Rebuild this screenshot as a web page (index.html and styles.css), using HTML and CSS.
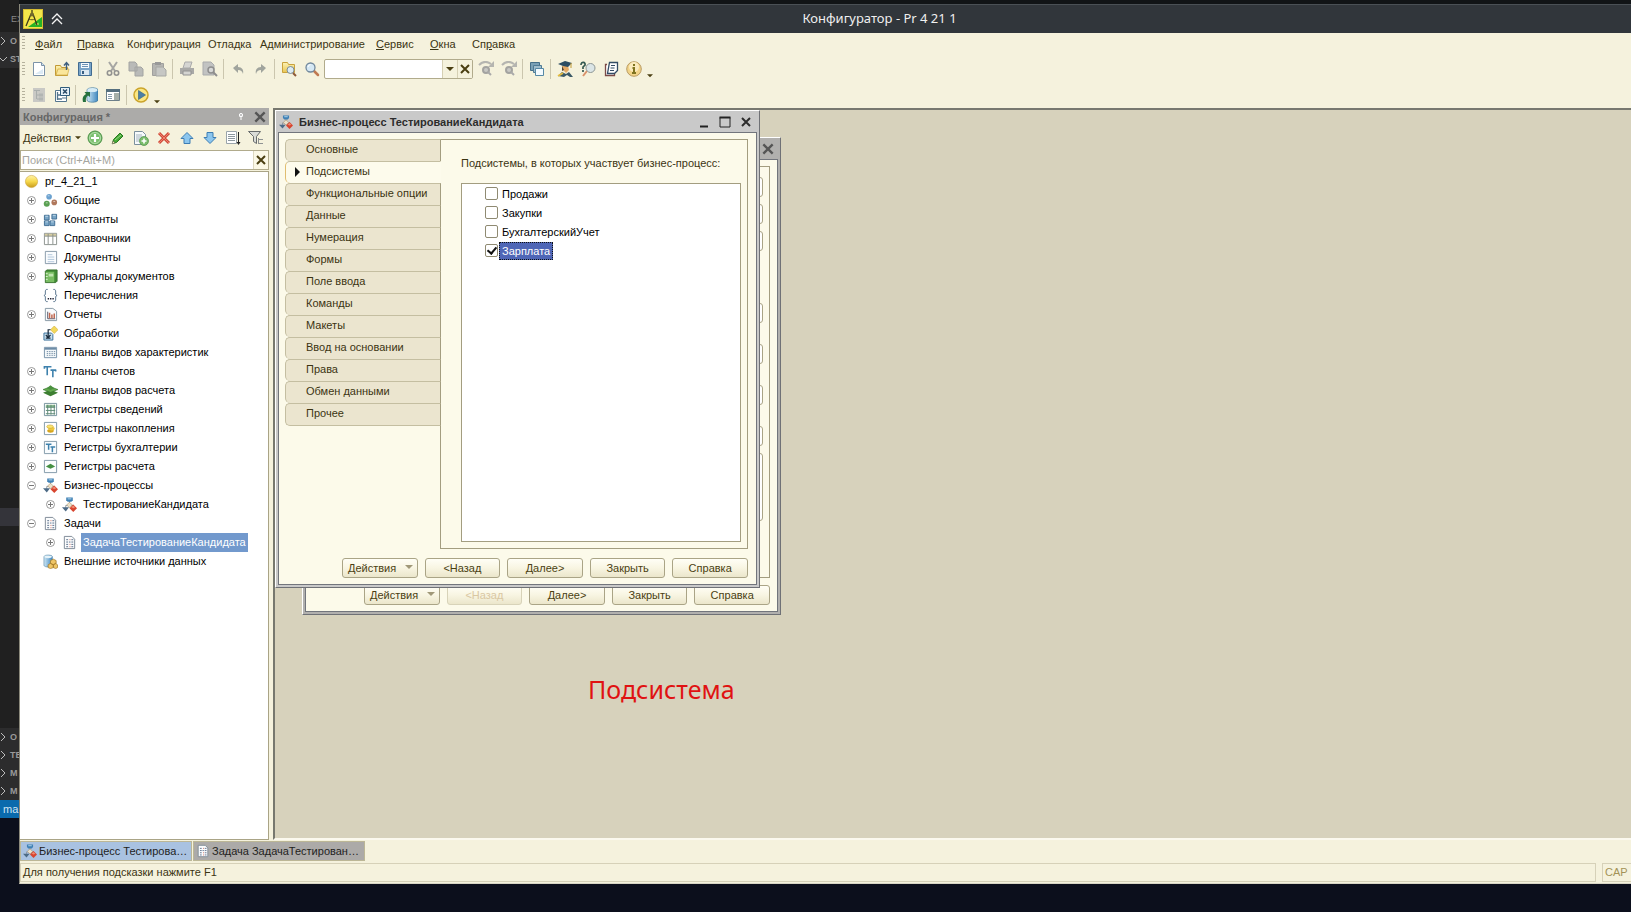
FILE: index.html
```html
<!DOCTYPE html>
<html lang="ru">
<head>
<meta charset="utf-8">
<title>Конфигуратор - Pr 4 21 1</title>
<link rel="stylesheet" href="styles.css">
</head>
<body>
<svg class="sprite" aria-hidden="true">
  <defs>
    <linearGradient id="gold" x1="0" y1="0" x2="0" y2="1"><stop offset="0" stop-color="#fff3a8"/><stop offset=".5" stop-color="#f6d84c"/><stop offset="1" stop-color="#c79a1c"/></linearGradient>
    <linearGradient id="blue" x1="0" y1="0" x2="1" y2="0"><stop offset="0" stop-color="#cfe8f6"/><stop offset="1" stop-color="#3f86bd"/></linearGradient>
    <linearGradient id="folder" x1="0" y1="0" x2="0" y2="1"><stop offset="0" stop-color="#fdf3b4"/><stop offset="1" stop-color="#e8c552"/></linearGradient>
  </defs>
  <symbol id="plus" viewBox="0 0 11 11"><circle cx="5.5" cy="5.5" r="4" fill="#fff" stroke="#999"/><path d="M3 5.5h5M5.5 3v5" stroke="#777"/></symbol>
  <symbol id="minus" viewBox="0 0 11 11"><circle cx="5.5" cy="5.5" r="4" fill="#fff" stroke="#999"/><path d="M3 5.5h5" stroke="#777"/></symbol>
  <symbol id="process" viewBox="0 0 16 16"><path d="M8 4v4M4 12V9h8v3" fill="none" stroke="#8a94a0"/><path d="M4.500 .5h7v3l-1.500 1.500h-4L4.500 3.500z" fill="#3f80b4"/><path d="M6 1.500h4v1H6z" fill="#b9dcf2"/><path d="M8 5.500l3 3-3 3-3-3z" fill="#ebe0ca" stroke="#a88e60" stroke-width=".6"/><path d="M0 11h7.500L4 15.500z" fill="#4c6a86"/><path d="M12 8l4 4-4 4-4-4z" fill="#d8452f"/><path d="M12 9l2 2-2 1-2-1z" fill="#f08b72"/></symbol>
  <symbol id="task" viewBox="0 0 16 16"><path d="M2.500 1.500h8l3 3v10h-11z" fill="#fbfcfd" stroke="#7c8894"/><path d="M4.500 5h2M4.500 7.500h2M4.500 10h2M4.500 12.500h2" stroke="#566c88"/><path d="M8 5h1M8 10h1M8 12.500h1" stroke="#d0634f"/><path d="M10 5h2M10 7.500h2M10 10h2M10 12.500h2M7.500 7.500h1.500" stroke="#566c88"/></symbol>
  <symbol id="cross" viewBox="0 0 12 12"><path d="M2 2l8 8M10 2l-8 8" fill="none" stroke="currentColor" stroke-width="2"/></symbol>
  <symbol id="down" viewBox="0 0 8 5"><path d="M0 0h8L4 4z" fill="currentColor"/></symbol>
  <symbol id="chev" viewBox="0 0 6 10"><path d="M1 1l4 4-4 4" fill="none" stroke="#bbb"/></symbol>
  <symbol id="lens" viewBox="0 0 16 16"><path d="M10 10l4 4" stroke="#c07a52" stroke-width="2.500" stroke-linecap="round"/><circle cx="6.500" cy="6.500" r="4.500" fill="#d5e8f4" stroke="#71889c" stroke-width="1.300"/><path d="M4 6a3 3 0 0 1 2.500-2.500" fill="none" stroke="#fff"/></symbol>
  <symbol id="skip" viewBox="0 0 16 16"><path d="M1 4c4-4 8-4 12-1" fill="none" stroke="#b5b5b0" stroke-width="2"/><path d="M10 6h6V0z" fill="#b5b5b0"/><circle cx="8" cy="9" r="3" fill="#c8c8c4" stroke="#a3a3a0" stroke-width="2"/><path d="M10 11l3 3" stroke="#aaa" stroke-width="2"/></symbol>
  <symbol id="tt" viewBox="0 0 16 16"><path d="M1 3h8M4.500 3v9M8 6.500h6M10.500 6.500V14M1.500 2v3M13.500 6v2" fill="none" stroke="#3d81ad" stroke-width="1.700"/></symbol>
  <symbol id="layers" viewBox="0 0 16 16"><path d="M0 10.500l8-3.500 8 3.500-8 3.500z" fill="#3d7f32"/><path d="M0 7l8-3 8 3-8 3z" fill="#62a94e" stroke="#2f6e28" stroke-width=".6"/><path d="M4 5.500L8 2.500l4 3-4 2z" fill="#4b9140"/></symbol>
</svg>

<div class="desktop">
  <aside class="editor-strip" aria-label="Редактор">
    <div class="es-row es-head">EX</div>
    <div class="es-row es-section"><svg class="chev"><use href="#chev"/></svg>O</div>
    <div class="es-row es-section"><svg class="chev open"><use href="#chev"/></svg>ST</div>
    <div class="es-body"><div class="es-current"></div></div>
    <div class="es-row es-section"><svg class="chev"><use href="#chev"/></svg>O</div>
    <div class="es-row es-section"><svg class="chev"><use href="#chev"/></svg>TE</div>
    <div class="es-row es-section"><svg class="chev"><use href="#chev"/></svg>M</div>
    <div class="es-row es-section"><svg class="chev"><use href="#chev"/></svg>M</div>
    <div class="es-row es-status">ma</div>
  </aside>

  <div class="app">
    <header class="titlebar">
      <svg class="logo" viewBox="0 0 20 20"><rect width="20" height="20" fill="#f3e64a"/><rect x=".5" y=".5" width="19" height="19" fill="none" stroke="#d5bb32"/><path d="M5 18l14-10v10z" fill="#27b324"/><path d="M12 16l3.500-2.500V16z" fill="#e8f06c"/><path d="M9 1v3M8 5L3 17M10 5l4 11" fill="none" stroke="#3d3a18" stroke-width="1.300"/><circle cx="9" cy="5.500" r="2" fill="#746b2c"/><path d="M6 10c2 1 4 1 6 0" fill="none" stroke="#3d3a18" stroke-width=".8"/></svg>
      <svg class="collapse" viewBox="0 0 12 12"><path d="M1 6l5-5 5 5M1 11l5-5 5 5" fill="none" stroke="#f4f4f4" stroke-width="1.300"/></svg>
      <h1>Конфигуратор - Pr 4 21 1</h1>
    </header>

    <nav class="menubar">
      <span class="grip"></span>
      <button><u>Ф</u>айл</button><button><u>П</u>равка</button><button>Конфигурация</button><button>Отладка</button><button>Администрирование</button><button><u>С</u>ервис</button><button><u>О</u>кна</button><button>Сп<u>р</u>авка</button>
    </nav>

    <div class="toolbar">
      <span class="grip"></span>
      <button class="tool" aria-label="Новый"><svg viewBox="0 0 16 16"><path d="M2.500 1.500h8l3 3v10h-11z" fill="#fff" stroke="#7c93a8"/><path d="M10.500 1.500v3h3" fill="#cfe0ee" stroke="#7c93a8"/><path d="M4 13h8V8z" fill="#dceaf5"/></svg></button>
      <button class="tool" aria-label="Открыть"><svg viewBox="0 0 16 16"><path d="M1.500 4.500h5l1 2h6v8h-12z" fill="url(#folder)" stroke="#c29a35"/><path d="M2 14l2-6h11l-1.500 6z" fill="#fae69b" stroke="#d1ac46" stroke-width=".7"/><path d="M12.500 9V2M10 4.500L12.500 1.500 15 4.500" fill="none" stroke="#3e5f7f" stroke-width="1.400"/></svg></button>
      <button class="tool" aria-label="Сохранить"><svg viewBox="0 0 16 16"><path d="M1.500 1.500h13v13h-13z" fill="#79a4c8" stroke="#416b91"/><path d="M4 2h8v5H4z" fill="#f6fafc"/><path d="M5 3.500h6M5 5.500h6" stroke="#6d94b6"/><path d="M4 9h8v5H4z" fill="#dbe7f0"/><path d="M5 10h2v3H5z" fill="#365d82"/></svg></button>
      <span class="sep"></span>
      <button class="tool" aria-label="Вырезать" disabled><svg viewBox="0 0 16 16"><path d="M4 1l6 9M12 1l-6 9" stroke="#a6a6a3" stroke-width="2"/><circle cx="4.500" cy="12" r="2.200" fill="none" stroke="#929290" stroke-width="1.600"/><circle cx="11.500" cy="12" r="2.200" fill="none" stroke="#929290" stroke-width="1.600"/></svg></button>
      <button class="tool" aria-label="Копировать" disabled><svg viewBox="0 0 16 16"><path d="M1 1h6l2 2v7H1zM7 6h6l2 2v7H7z" fill="#b9bab8" stroke="#a3a4a2"/></svg></button>
      <button class="tool" aria-label="Вставить" disabled><svg viewBox="0 0 16 16"><path d="M1.500 2.500h11v12h-11z" fill="#b5b5b2" stroke="#a0a09d"/><path d="M4 1h6v3H4z" fill="#999"/><path d="M5 6h7l3 3v6H5z" fill="#c6c7c4" stroke="#a6a7a4"/></svg></button>
      <span class="sep"></span>
      <button class="tool" aria-label="Печать" disabled><svg viewBox="0 0 16 16"><path d="M4 7L6 1h7l-2 6z" fill="#d5d5d2" stroke="#aaa"/><path d="M1 7h14v6H1z" fill="#a9a9a7"/><path d="M4 10h8v4H4z" fill="#d4d4d1" stroke="#929292"/></svg></button>
      <button class="tool" aria-label="Просмотр" disabled><svg viewBox="0 0 16 16"><path d="M1 1h8l3 3v10H1z" fill="#c2c3c2" stroke="#a9abac"/><circle cx="9" cy="9" r="3" fill="#d7d8d7" stroke="#8e8e8e" stroke-width="1.500"/><path d="M11 11l4 4" stroke="#8e8e8e" stroke-width="2"/></svg></button>
      <span class="sep"></span>
      <button class="tool" aria-label="Отменить" disabled><svg viewBox="0 0 16 16"><path d="M3 7l5-4v3c4 0 6 3 5 7-1-3-2-4-5-4v3z" fill="#a0a49d"/></svg></button>
      <button class="tool" aria-label="Вернуть" disabled><svg viewBox="0 0 16 16"><path d="M13 7L8 3v3c-4 0-6 3-5 7 1-3 2-4 5-4v3z" fill="#a0a49d"/></svg></button>
      <span class="sep"></span>
      <button class="tool" aria-label="Глобальный поиск"><svg viewBox="0 0 16 16"><path d="M1.500 1.500h5l1 2h6v8h-12z" fill="url(#folder)" stroke="#c9a23c"/><circle cx="9.500" cy="9" r="3.500" fill="#dcebf3" stroke="#7b8d98"/><path d="M12 12l3 3" stroke="#8c5939" stroke-width="2"/></svg></button>
      <button class="tool" aria-label="Найти"><svg><use href="#lens"/></svg></button>
      <div class="combo"><input aria-label="Искать"><button aria-label="Список"><svg class="arrow"><use href="#down"/></svg></button><button aria-label="Очистить"><svg class="x-small"><use href="#cross"/></svg></button></div>
      <button class="tool" aria-label="Найти далее" disabled><svg><use href="#skip"/></svg></button>
      <button class="tool" aria-label="Найти ранее" disabled><svg><use href="#skip"/></svg></button>
      <span class="sep"></span>
      <button class="tool" aria-label="Окна"><svg viewBox="0 0 16 16"><path d="M1.500 1.500h9v8h-9z" fill="#7aa0b5" stroke="#456f88"/><path d="M4.500 4.500h8v7h-8z" fill="#9fbccb" stroke="#4f7b95"/><path d="M6.500 7.500h8v7h-8z" fill="#f3fafe" stroke="#5689a5"/></svg></button>
      <span class="sep"></span>
      <button class="tool" aria-label="Синтаксис-помощник"><svg viewBox="0 0 16 16"><path d="M5 5h6l1 4-3 3-3-3z" fill="#e5aa66"/><path d="M1 3l7-3 7 2-4 4-5-1z" fill="#2c4d63"/><path d="M14 2v5" stroke="#c49c35"/><path d="M5 5l2 4-2 1z" fill="#50402f"/><path d="M1 15l4-4 4 2 3-2 4 5h-3l-3-2-3 2z" fill="#3b5966"/><path d="M1 15l5-3" stroke="#e4bb3e" stroke-width="2"/></svg></button>
      <button class="tool" aria-label="Поиск в справке"><svg viewBox="0 0 16 16"><path d="M1 4c0-4 5-3 4 0L3 6v2M3 9v2" fill="none" stroke="#355a52" stroke-width="1.700"/><path d="M7 10l-4 5" stroke="#d99169" stroke-width="2"/><circle cx="10.500" cy="7" r="4.500" fill="#dbe5e6" stroke="#8d9694"/></svg></button>
      <button class="tool" aria-label="Шаблоны"><svg viewBox="0 0 16 16"><path d="M4 3.500H2.500v11h9V13" fill="#fff" stroke="#7c4b47" stroke-width="1.300"/><path d="M6.500 1.500h8v8l-3 3h-7z" fill="#fff" stroke="#334c65" stroke-width="1.300"/><path d="M8 4.500h4M7.500 7h4M7 9.500h4" stroke="#334c65"/></svg></button>
      <button class="tool" aria-label="О программе"><svg viewBox="0 0 16 16"><circle cx="8" cy="8" r="7.300" fill="#f2d488" stroke="#b99b64"/><circle cx="8" cy="6" r="5" fill="#fbebbd"/><path d="M8 3v2M6.500 7H8v5M6 12h4" fill="none" stroke="#7f7420" stroke-width="2"/></svg></button>
      <svg class="arrow overflow"><use href="#down"/></svg>
    </div>

    <div class="toolbar">
      <span class="grip"></span>
      <button class="tool" aria-label="Открыть конфигурацию" disabled><svg viewBox="0 0 16 16"><path d="M2 1h12v14H2z" fill="#c9c9c5"/><path d="M3 3.500h6M5.500 4v8M6 8h2M6 12h2" fill="none" stroke="#a9aeac"/><path d="M8 6.500h4v3H8zM8 10.500h4v3H8z" fill="#b2b5b3"/></svg></button>
      <button class="tool" aria-label="Закрыть конфигурацию"><svg viewBox="0 0 16 16"><path d="M1.500 3.500h11v11h-11z" fill="#fff" stroke="#54768e"/><path d="M3.500 5v8M4 8h4M4 12h4" stroke="#54768e" stroke-width="1.300"/><path d="M6.500 .5h9v8h-9z" fill="#e7f1f7" stroke="#305c7c"/><path d="M9 2.500l4 4M13 2.500l-4 4" stroke="#274967" stroke-width="1.500"/><path d="M8 11h4" stroke="#54768e"/></svg></button>
      <span class="sep"></span>
      <button class="tool" aria-label="Обновить базу"><svg viewBox="0 0 16 16"><path d="M5 3c0-3 11-3 11 0v10c0 3-11 3-11 0z" fill="url(#blue)" stroke="#346c91" stroke-width=".6"/><ellipse cx="10.500" cy="3" rx="5" ry="2" fill="#d6ebf5"/><path d="M1 15c-1-4 0-6 3-8L2.500 5H8v5L6 8.500C4 10 3.500 12 4 15z" fill="#26713e"/></svg></button>
      <button class="tool" aria-label="Палитра"><svg viewBox="0 0 16 16"><path d="M1.500 2.500h13v11h-13z" fill="#fff" stroke="#6d7f89"/><path d="M1 2h14v3H1z" fill="#556f7f"/><path d="M3 7.500h4M3 9.500h4M3 11.500h4" stroke="#869aaa"/><path d="M9 6h5v7H9z" fill="#a6afa9"/></svg></button>
      <span class="sep"></span>
      <button class="tool" aria-label="Начать отладку"><svg viewBox="0 0 16 16"><circle cx="8" cy="8" r="7" fill="#fbe784" stroke="#cba42b" stroke-width="1.500"/><path d="M5.500 3.500l7 4.500-7 4.500z" fill="#4c7fa6" stroke="#2e5f85" stroke-width=".6"/></svg></button>
      <svg class="arrow overflow"><use href="#down"/></svg>
    </div>

    <main class="main">
      <section class="sidebar">
        <div class="side-title"><h2>Конфигурация *</h2><svg class="pin" viewBox="0 0 6 10"><path d="M3 5v3M1.500 4.500h3" stroke="#fff"/><circle cx="3" cy="3" r="1.600" fill="#bbb" stroke="#fff"/></svg><svg class="x-large"><use href="#cross"/></svg></div>
        <div class="side-tools">
          <button class="actions">Действия <svg class="arrow small"><use href="#down"/></svg></button>
          <button class="tool" aria-label="Добавить"><svg viewBox="0 0 16 16"><circle cx="8" cy="8" r="7" fill="#7cc06f" stroke="#4b9045"/><circle cx="8" cy="8" r="5.500" fill="none" stroke="#b2deaa"/><path d="M8 4v8M4 8h8" stroke="#fff" stroke-width="2.200"/></svg></button>
          <button class="tool" aria-label="Изменить"><svg viewBox="0 0 16 16"><path d="M2.500 13.500l1-4 6.500-6.500 3 3-6.500 6.500z" fill="#45a936" stroke="#27761f"/><path d="M5 10l6-5" stroke="#9ada88"/><path d="M2 14l1-3 2 2z" fill="#f5e6b4" stroke="#555" stroke-width=".5"/></svg></button>
          <button class="tool" aria-label="Копировать объект"><svg viewBox="0 0 16 16"><path d="M1.500 1.500h8l3 3v10h-11z" fill="#f7fafc" stroke="#7b8f9d"/><path d="M3 5h6M3 7h6M3 9h4M3 11h3" stroke="#a5b4bf"/><circle cx="11" cy="11" r="4.500" fill="#7bbc6c" stroke="#4c9045" stroke-width=".7"/><path d="M11 8.500v5M8.500 11h5" stroke="#fff" stroke-width="1.600"/></svg></button>
          <button class="tool" aria-label="Удалить"><svg viewBox="0 0 16 16"><path d="M3 3l10 10M13 3L3 13" stroke="#d04c3a" stroke-width="3"/><path d="M3 3l10 10M13 3L3 13" stroke="#ef806c"/></svg></button>
          <button class="tool" aria-label="Вверх"><svg viewBox="0 0 16 16"><path d="M8 2.500L14 8.500H11v5H5v-5H2z" fill="#8cc6ee" stroke="#3d7db3"/></svg></button>
          <button class="tool" aria-label="Вниз"><svg viewBox="0 0 16 16"><path d="M8 13.500L14 7.500H11v-5H5v5H2z" fill="#8cc6ee" stroke="#3d7db3"/></svg></button>
          <button class="tool" aria-label="Сортировка"><svg viewBox="0 0 16 16"><path d="M1.500 1.500h10v12h-10z" fill="#fff" stroke="#9aa4aa"/><path d="M3 4.500h7M3 6.500h7M3 8.500h7M3 10.500h7" stroke="#8d989e"/><path d="M13.500 2v11" stroke="#222"/><path d="M11.500 12h4l-2 3z" fill="#222"/></svg></button>
          <button class="tool" aria-label="Отбор"><svg viewBox="0 0 16 16"><path d="M.5 1.500h12l-4 5v7l-3-2v-5z" fill="#dadcd8" stroke="#676b6c"/><path d="M10.500 8v6M10.500 9.500H15M10.500 13.500H15" fill="none" stroke="#8e9292"/></svg></button>
        </div>
        <div class="search"><input type="text" placeholder="Поиск (Ctrl+Alt+M)" aria-label="Поиск"><button aria-label="Очистить поиск"><svg class="x-small"><use href="#cross"/></svg></button></div>
        <ul class="tree">
          <li><svg class="ico" viewBox="0 0 16 16"><circle cx="8" cy="8" r="6.500" fill="url(#gold)" stroke="#c9a136" stroke-width=".6"/></svg><span>pr_4_21_1</span></li>
          <li><svg class="exp"><use href="#plus"/></svg><svg class="ico" viewBox="0 0 16 16"><circle cx="6.500" cy="4" r="3" fill="#6ba1cf"/><circle cx="4" cy="11.500" r="3.200" fill="#5aa052"/><circle cx="12" cy="10" r="3" fill="#b0785c"/><path d="M5 3h2M3 10.500h2M11 9h2" stroke="#fff" opacity=".6"/></svg><span>Общие</span></li>
          <li><svg class="exp"><use href="#plus"/></svg><svg class="ico" viewBox="0 0 16 16"><path d="M1.500 3.500h5v5h-5zM1.500 9.500h5v5h-5zM7.500 9.500h5v5h-5zM9.500 2.500h5v5h-5z" fill="#79a5c6" stroke="#3f6d92"/><path d="M2.500 4.500h3M2.500 10.500h3M8.500 10.500h3M10.500 3.500h3" stroke="#c6deee"/></svg><span>Константы</span></li>
          <li><svg class="exp"><use href="#plus"/></svg><svg class="ico" viewBox="0 0 16 16"><path d="M1.500 2.500h13v12h-13z" fill="#fff" stroke="#8a908c"/><path d="M2 3h12v2.500H2z" fill="#d7cda0"/><path d="M5.500 3v11M10.500 3v11M2 5.500h12" stroke="#8a908c"/></svg><span>Справочники</span></li>
          <li><svg class="exp"><use href="#plus"/></svg><svg class="ico" viewBox="0 0 16 16"><path d="M2.500 1.500h12v13h-12z" fill="#fafcfe" stroke="#8597a8"/><path d="M5 5h5M5 7.500h7M5 10h7M5 12.500h7" stroke="#aec4da"/></svg><span>Документы</span></li>
          <li><svg class="exp"><use href="#plus"/></svg><svg class="ico" viewBox="0 0 16 16"><path d="M2.500 2.500L4 1h11v12l-1.500 1.500h-11z" fill="#418c35" stroke="#356f2d"/><path d="M3 3h9v11H3z" fill="#79bd63"/><path d="M6 5h5v3H6z" fill="#c0e4b0"/><path d="M3 5h2M3 8h2M3 11h2" stroke="#e3f3db"/></svg><span>Журналы документов</span></li>
          <li><i class="exp"></i><svg class="ico" viewBox="0 0 16 16"><path d="M5 1.500H3.500L2.500 3v4L1 8l1.500 1v4l1 1.500H5M11 1.500h1.500l1 1.500v4L15 8l-1.500 1v4l-1 1.500H11" fill="none" stroke="#54708a"/><path d="M5 11.500h1.500M7.500 11.500H9M10 11.500h1.500" stroke="#223" stroke-width="1.500"/></svg><span>Перечисления</span></li>
          <li><svg class="exp"><use href="#plus"/></svg><svg class="ico" viewBox="0 0 16 16"><path d="M2.500 1.500h8l4 3v10h-12z" fill="#f9fbfc" stroke="#8496a3"/><path d="M5 5v7.500h8" fill="none" stroke="#556"/><path d="M7 6v6M9.500 8v4M12 7v5" stroke="#c0674f" stroke-width="1.600"/></svg><span>Отчеты</span></li>
          <li><i class="exp"></i><svg class="ico" viewBox="0 0 16 16"><path d="M12 0l4 4-4 4-4-4z" fill="#f3d95c" stroke="#cba834" stroke-width=".6"/><path d="M1 7.500h8l1.500 1.500v6h-9.500z" fill="#c6dfef" stroke="#356d97"/><path d="M8 4H5.500v7M3 9.500l2.500 3 2.500-3M3 13h5" fill="none" stroke="#17283a" stroke-width="1.300"/></svg><span>Обработки</span></li>
          <li><i class="exp"></i><svg class="ico" viewBox="0 0 16 16"><path d="M1.500 2.500h13v11h-13z" fill="#f5f9fb" stroke="#7490a7"/><path d="M2 3h12v2H2z" fill="#6d8ca7"/><path d="M4 7h9M4 9h9M4 11h9" stroke="#748da4" stroke-dasharray="1.500 1"/></svg><span>Планы видов характеристик</span></li>
          <li><svg class="exp"><use href="#plus"/></svg><svg class="ico"><use href="#tt"/></svg><span>Планы счетов</span></li>
          <li><svg class="exp"><use href="#plus"/></svg><svg class="ico"><use href="#layers"/></svg><span>Планы видов расчета</span></li>
          <li><svg class="exp"><use href="#plus"/></svg><svg class="ico" viewBox="0 0 16 16"><path d="M1.500 1.500h13v13h-13z" fill="#fff" stroke="#74929c"/><path d="M3 3h10v3H3z" fill="#8fbd91"/><path d="M3 5.500h10M3 9h10M3 12.500h10M5 3v10.500M8.500 3v10.500M12 3v10.500" stroke="#5b8774"/></svg><span>Регистры сведений</span></li>
          <li><svg class="exp"><use href="#plus"/></svg><svg class="ico" viewBox="0 0 16 16"><path d="M1.500 1.500h13v13h-13z" fill="#fff" stroke="#7f98a8"/><ellipse cx="8" cy="10.500" rx="3.500" ry="2" fill="#d6a51e"/><ellipse cx="9" cy="8" rx="3.500" ry="2" fill="#edc83f"/><ellipse cx="7.500" cy="6" rx="3.500" ry="1.800" fill="#f8e472" stroke="#caa126" stroke-width=".6"/></svg><span>Регистры накопления</span></li>
          <li><svg class="exp"><use href="#plus"/></svg><svg class="ico" viewBox="0 0 16 16"><path d="M1.500 1.500h13v13h-13z" fill="#f9fcfe" stroke="#7f98a8"/><path d="M3 4.500h6M6 4.500v6M8 7.500h5M10 7.500V13" fill="none" stroke="#3d81ad" stroke-width="1.600"/></svg><span>Регистры бухгалтерии</span></li>
          <li><svg class="exp"><use href="#plus"/></svg><svg class="ico" viewBox="0 0 16 16"><path d="M1.500 1.500h13v13h-13z" fill="#fbfdfe" stroke="#7f98a8"/><path d="M3 8l5-3 5 3-5 2.500z" fill="#459044"/></svg><span>Регистры расчета</span></li>
          <li><svg class="exp"><use href="#minus"/></svg><svg class="ico"><use href="#process"/></svg><span>Бизнес-процессы</span></li>
          <li class="child"><svg class="exp"><use href="#plus"/></svg><svg class="ico"><use href="#process"/></svg><span>ТестированиеКандидата</span></li>
          <li><svg class="exp"><use href="#minus"/></svg><svg class="ico"><use href="#task"/></svg><span>Задачи</span></li>
          <li class="child selected"><svg class="exp"><use href="#plus"/></svg><svg class="ico"><use href="#task"/></svg><span>ЗадачаТестированиеКандидата</span></li>
          <li><i class="exp"></i><svg class="ico" viewBox="0 0 16 16"><path d="M1 3c0-2.500 9-2.500 9 0v9c0 2.500-9 2.500-9 0z" fill="url(#blue)" stroke="#4b7e9f" stroke-width=".6"/><ellipse cx="5.500" cy="3" rx="4" ry="1.500" fill="#e6f3f9"/><path d="M8 7l3-1.500L14 7v3l-3 1.500L8 10zM5.500 11.500l2.500-1.500 3 1.500v3L8 15.500l-2.500-1zM11 11.500l2.500-1.500 2 1.500v3l-2 1-2.500-1z" fill="#eec566" stroke="#a77c28" stroke-width=".8"/></svg><span>Внешние источники данных</span></li>
        </ul>
      </section>

      <section class="workspace">
        <div class="dialog back">
          <div class="dialog-title"><h2></h2><svg class="x-large"><use href="#cross"/></svg></div>
          <div class="dialog-body">
            <div class="back-panel">
              <input aria-label="Имя"><input aria-label="Синоним"><input aria-label="Комментарий">
              <input class="spaced" aria-label="Поле 4"><input class="wide" aria-label="Поле 5"><input class="wide" aria-label="Поле 6"><input class="wide" aria-label="Поле 7">
              <textarea aria-label="Пояснение"></textarea>
            </div>
            <div class="buttons"><button class="drop">Действия<svg class="arrow small"><use href="#down"/></svg></button><button disabled>&lt;Назад</button><button>Далее&gt;</button><button>Закрыть</button><button>Справка</button></div>
          </div>
        </div>

        <div class="dialog front">
          <div class="dialog-title"><svg class="title-icon"><use href="#process"/></svg><h2>Бизнес-процесс ТестированиеКандидата</h2>
            <svg class="win" viewBox="0 0 12 12"><path d="M2 10.500h8" stroke="#222" stroke-width="2"/></svg>
            <svg class="win" viewBox="0 0 12 12"><path d="M1 1.500h10v9.500H1z" fill="none" stroke="#222"/><path d="M.5 1.500h11" stroke="#222" stroke-width="2"/></svg>
            <svg class="win"><use href="#cross"/></svg></div>
          <div class="dialog-body">
            <div class="form">
              <div class="tabs">
                <button>Основные</button><button class="active">Подсистемы</button><button>Функциональные опции</button><button>Данные</button><button>Нумерация</button><button>Формы</button><button>Поле ввода</button><button>Команды</button><button>Макеты</button><button>Ввод на основании</button><button>Права</button><button>Обмен данными</button><button>Прочее</button>
              </div>
              <div class="panel">
                <p>Подсистемы, в которых участвует бизнес-процесс:</p>
                <div class="list">
                  <label><input type="checkbox"><span>Продажи</span></label>
                  <label><input type="checkbox"><span>Закупки</span></label>
                  <label><input type="checkbox"><span>БухгалтерскийУчет</span></label>
                  <label class="current"><input type="checkbox" checked><span>Зарплата</span></label>
                </div>
              </div>
            </div>
            <div class="buttons"><button class="drop">Действия<svg class="arrow small"><use href="#down"/></svg></button><button>&lt;Назад</button><button>Далее&gt;</button><button>Закрыть</button><button>Справка</button></div>
          </div>
        </div>
        <div class="note">Подсистема</div>
      </section>
    </main>

    <div class="taskbar">
      <button class="on"><svg><use href="#process"/></svg><span>Бизнес-процесс Тестирова…</span></button>
      <button><svg><use href="#task"/></svg><span>Задача ЗадачаТестирован…</span></button>
    </div>
    <footer class="status"><div class="hint">Для получения подсказки нажмите F1</div><div class="caps">CAP</div></footer>
  </div>
</div>
</body>
</html>
```

FILE: styles.css
```css
* { box-sizing: border-box; }
body {
  margin: 0;
  background: #0c0f1c;
  font: 11px/14px "Liberation Sans", Arial, sans-serif;
  color: #3b3412;
  overflow: hidden;
}
button, input, textarea { font: inherit; color: inherit; margin: 0; padding: 0; border: 0; background: none; border-radius: 0; }
h1, h2, p, ul { margin: 0; padding: 0; font: inherit; }
svg { display: block; flex: none; }
.sprite { position: absolute; width: 0; height: 0; }

.desktop { display: grid; grid-template-columns: 19px minmax(0, 1fr); height: 100vh; padding-top: 4px; padding-bottom: 28px; background: linear-gradient(#111416 4px, transparent 4px); }

/* Editor visible behind the application */
.editor-strip { display: flex; flex-direction: column; overflow: hidden; margin-bottom: 66px; margin-top: -4px; padding-top: 6px; background: #202020; color: #999; }
.es-row { flex: none; display: flex; align-items: center; height: 18px; gap: 4px; font-size: 9px; font-weight: bold; white-space: nowrap; }
.es-head { height: 26px; padding-left: 11px; font-weight: normal; color: #888; }
.es-section { background: #2c2c2d; }
.es-status { padding-left: 3px; background: #0a6aad; color: #cfe3f2; font-weight: normal; font-size: 11px; }
.es-body { flex: 1; padding-top: 440px; }
.es-current { height: 18px; background: #34343a; }
.chev { width: 6px; height: 10px; }
.chev.open { transform: rotate(90deg); }

.app { display: flex; flex-direction: column; min-width: 0; background: #f5f2dd; border-left: 1px solid #8c8a7c; border-bottom: 1px solid #d8d5c4; }
.titlebar { flex: none; display: flex; align-items: center; height: 29px; padding: 0 14px 0 3px; background: #31363b; border-top: 1px solid #4a5055; }
.logo { width: 20px; height: 20px; }
.collapse { width: 12px; height: 12px; margin-left: 8px; }
.titlebar h1 { flex: 1; padding: 0 0 2px 79px; text-align: center; color: #f0f0f0; font: 13px/18px "Noto Sans", sans-serif; }

.grip { flex: none; width: 3px; height: 15px; background: repeating-linear-gradient(#b5b19d 0 1px, transparent 1px 3px); }
.menubar { flex: none; display: grid; grid-template-columns: 13px 42px 50px 81px 52px 116px 54px 42px 1fr; align-items: center; height: 23px; padding: 0 0 2px 2px; }
.menubar button { text-align: left; white-space: nowrap; }
.toolbar { flex: none; display: flex; align-items: center; height: 26px; padding-left: 2px; }
.toolbar .grip { margin-right: 2px; }
.tool { flex: none; display: grid; place-items: center; width: 23px; height: 22px; }
.tool svg { width: 16px; height: 16px; }
.sep { width: 1px; height: 20px; margin: 0 2px; background: #cbc6ae; }
.arrow { width: 8px; height: 5px; color: #4a3f12; }
.arrow.small { width: 6px; height: 4px; }
.overflow { align-self: flex-end; width: 6px; height: 4px; margin: 0 0 4px 2px; }
.x-small { width: 12px; height: 12px; color: #4a3f12; }
.x-large { width: 14px; height: 14px; color: #555; }
.combo { display: flex; width: 149px; height: 20px; margin: 0 1px 0 1px; border: 1px solid #b1ab8c; border-radius: 2px; background: #fff; overflow: hidden; }
.combo input { flex: 1; min-width: 0; }
.combo button { display: grid; place-items: center; width: 15px; background: #f5f2dd; border-left: 1px solid #d6d0b4; }

.main { flex: 1; min-height: 0; display: grid; grid-template-columns: 249px minmax(0, 1fr); gap: 4px; }
.sidebar { display: flex; flex-direction: column; min-height: 0; }
.side-title { flex: none; display: flex; align-items: center; height: 17px; padding: 0 2px 0 3px; background: #acaba9; color: #666; }
.side-title h2 { flex: 1; font-weight: bold; }
.pin { width: 6px; height: 10px; margin-right: 9px; }
.side-tools { flex: none; display: flex; align-items: center; height: 25px; padding-left: 3px; }
.actions { display: flex; align-items: center; gap: 4px; width: 60px; white-space: nowrap; }
.search { flex: none; display: flex; height: 20px; border: 1px solid #b1ab8c; background: #fff; }
.search input { flex: 1; min-width: 0; padding-left: 1px; }
.search input::placeholder { color: #a6a6a0; opacity: 1; }
.search button { display: grid; place-items: center; width: 15px; background: #fbf8e6; border-left: 1px solid #ddd8c0; }
.tree { flex: 1; min-height: 0; margin-top: 1px; padding-left: 2px; border: 1px solid #aaa486; border-left-width: 0; background: #fff; color: #000; list-style: none; overflow: hidden; }
.tree li { display: flex; align-items: center; height: 19px; }
.tree li.child { padding-left: 19px; }
.exp { flex: none; width: 19px; height: 11px; }
.ico { width: 15px; height: 15px; margin: 0 2px; }
.tree span { margin-left: 2px; padding: 0 2px; line-height: 19px; white-space: nowrap; }
.selected span { background: #7299cd; color: #fff; }

.workspace { position: relative; overflow: hidden; background: #d7d2bc; border-top: 2px solid #77786f; border-left: 2px solid #77786f; border-bottom: 2px solid #fbf9ee; }

/* Child windows float on the workspace canvas */
.dialog { position: absolute; display: flex; flex-direction: column; padding: 0 2px 2px; background: #c9c9c9; border: 1px solid #6f7176; border-top-color: #fff; border-left-color: #fff; }
.front { left: 0; top: 0; width: 485px; height: 478px; }
.back { left: 27px; top: 27px; width: 479px; height: 478px; background: #b1b0ae; }
.dialog-title { flex: none; display: flex; align-items: center; gap: 9px; height: 21px; padding: 0 5px 0 1px; color: #2c2c2c; }
.dialog-title h2 { flex: 1; margin-left: -3px; font-weight: bold; }
.title-icon { width: 14px; height: 16px; }
.win { width: 12px; height: 12px; }
.dialog-body { flex: 1; min-height: 0; display: flex; flex-direction: column; gap: 9px; padding: 6px 8px 6px 6px; background: #fcfaea; border: 1px solid #72757c; }
.form { flex: 1; min-height: 0; display: flex; }
.tabs { flex: none; width: 156px; margin-right: -1px; z-index: 1; }
.tabs button { display: block; position: relative; width: 100%; height: 22px; padding: 0 0 4px 20px; text-align: left; background: #ebe5cf; border: 1px solid #c4bea1; border-right-color: #a39d80; border-bottom-width: 0; border-radius: 5px 0 0 5px; }
.tabs button:last-child { height: 23px; border-bottom-width: 1px; }
.tabs .active { background: #fdfbec; border-left-color: #e0bd70; border-right-color: #fdfbec; }
.tabs .active::before { content: ""; position: absolute; left: 9px; top: 5px; border: 5px solid transparent; border-left-color: #111; border-right-width: 0; }
.panel { flex: 1; min-width: 0; display: flex; flex-direction: column; padding: 16px 6px 6px 20px; border: 1px solid #a39d80; }
.panel p { margin-bottom: 13px; white-space: nowrap; }
.list { flex: 1; border: 1px solid #a39d80; background: #fff; color: #000; }
.list label { display: flex; align-items: center; height: 19px; padding-left: 23px; gap: 1px; }
.list input { appearance: none; display: grid; place-items: center; width: 13px; height: 13px; background: #fff; border: 1px solid #8f8a72; border-radius: 2px; }
.list input:checked::after { content: ""; width: 4px; height: 7px; margin-top: -2px; border: solid #111; border-width: 0 2px 2px 0; transform: rotate(40deg); }
.list span { padding: 1px 2px; border: 1px solid transparent; }
.current span { background: #4f66b6; color: #fff; border: 1px dotted #111; }
.buttons { flex: none; display: grid; grid-template-columns: repeat(5, minmax(0, 1fr)); gap: 7px; width: 406px; align-self: flex-end; }
.buttons button { display: flex; align-items: center; justify-content: center; height: 20px; padding-bottom: 1px; background: linear-gradient(#fffef6, #f8f5e2 50%, #ebe6cb); border: 1px solid #aaa486; border-radius: 3px; color: #4a3f12; }
.buttons .drop { justify-content: space-between; padding: 0 4px 1px 5px; }
.buttons .arrow { color: #a09878; width: 8px; height: 5px; }
.buttons button:disabled { color: #d9c7a2; border-color: #d8d3b9; }
.back-panel { flex: 1; display: flex; flex-direction: column; gap: 7px; padding: 10px 6px; border: 1px solid #a39d80; }
.back-panel input, .back-panel textarea { flex: none; height: 20px; background: #fff; border: 1px solid #aaa486; border-radius: 3px; }
.back-panel .spaced { margin-top: 45px; }
.back-panel .wide { margin-top: 14px; }
.back-panel textarea { height: 68px; resize: none; }
.back .dialog-body { gap: 7px; padding-left: 7px; padding-right: 7px; }
.back .dialog-title { padding-right: 3px; color: #555; }
.note { position: absolute; left: 313px; top: 561px; color: #e01212; font: 25px/36px "Noto Sans", sans-serif; }

.taskbar { flex: none; display: flex; gap: 1px; height: 23px; padding: 1px 0 2px; }
.taskbar button { display: flex; align-items: center; gap: 2px; width: 172px; padding: 0 2px; background: #acaaa8; border: 1px solid #bcb796; color: #22221d; }
.taskbar .on { background: #a9c2e1; }
.taskbar svg { width: 14px; height: 14px; }
.taskbar span { white-space: nowrap; }
.status { flex: none; display: flex; gap: 6px; height: 20px; padding-bottom: 1px; }
.hint { flex: 1; padding: 1px 2px; border: 1px solid #d6d1b8; }
.caps { width: 29px; padding: 1px 2px; border: 1px solid #d6d1b8; border-right: 0; color: #a39258; }
```
